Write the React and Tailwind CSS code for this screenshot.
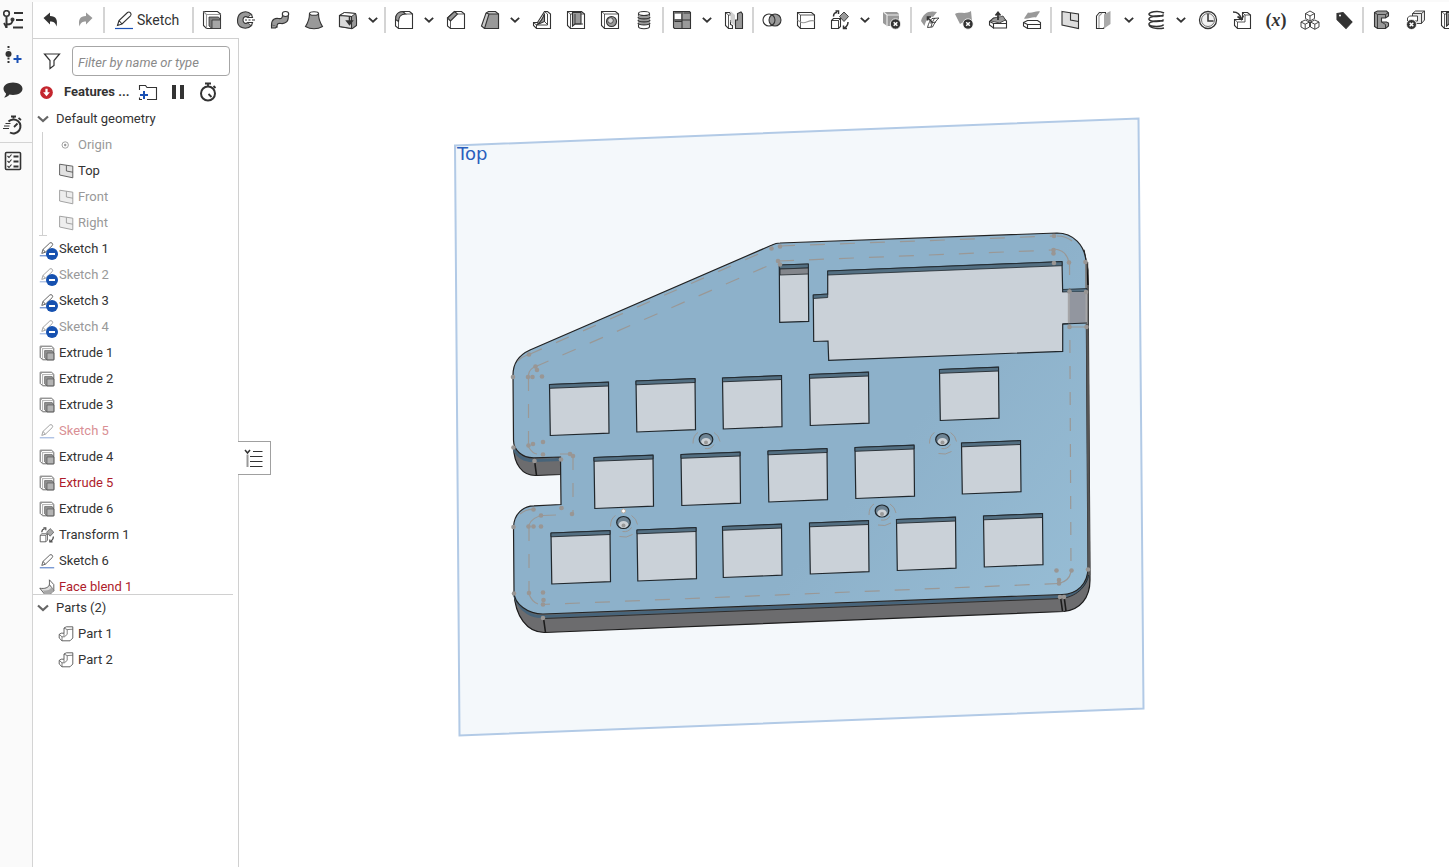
import React from 'react';

const D = '#333333';
const G = '#999999';
const L = '#d9d9d9';

const icons = {
  tree: (
    <>
      <circle cx="3.5" cy="3.5" r="2.8" strokeWidth="1.6" />
      <path d="M3.5 6.5V18M3.5 14.500c4.500 0 6-1 6-4.500" strokeWidth="2" />
      <circle cx="9.5" cy="9.5" r="1.5" fill={D} />
      <path d="M1 13l2.500 4.500" strokeWidth="1.800" />
      <path d="M11 3h9M13 10h7M10 17.500h10" strokeWidth="2" />
    </>
  ),
  undo: <path d="M2.500 8l6.500-5.500v3.500c6 0 8 4 6.500 10.500-1-4-3-5-6.500-5v3z" fill={D} stroke="none" />,
  redo: <path d="M17.500 8L11 2.500v3.500c-6 0-8 4-6.500 10.500 1-4 3-5 6.500-5v3z" fill={G} stroke="none" />,
  sketch: (
    <>
      <path d="M1 18.500h18" stroke="#1b51b5" strokeWidth="1.200" />
      <path d="M3.500 15.500l1.500-5L13.500 2.500q1.500-1.200 3 .3q1.200 1.500 0 3L8 14zM5 10.500l3 3.500" />
    </>
  ),
  extrude: (
    <>
      <path d="M1.500 1.500h14l3 2.500v14.500h-14l-3-3z" fill="#fff" />
      <path d="M1.500 1.500l3 3v14M4.500 4.500h14" stroke={G} />
      <path d="M7 7h9.500l2 3v8.500H10l-3-2.500z" fill="#808080" strokeWidth=".8" />
      <path d="M10 10h8.500v8.500H10z" fill="#a6a6a6" strokeWidth=".8" />
    </>
  ),
  revolve: (
    <>
      <path d="M15.500 4.500C11 0 2 1 1.500 10S11 20 15.500 15.500l-3.500-3c-3 2-5 0-5-2.500s2-4.500 5-2.500z" fill={G} />
      <path d="M15.500 4.500l1 3-4.500 0M15.500 15.500l1-3H12" fill="#fff" />
      <path d="M9 10h2M12.500 10h2M16 10h3" />
    </>
  ),
  sweep: (
    <>
      <path d="M1.500 15c0-6 4-7 7-6.500 3 .5 4-.5 4-3.500L18 4c1.500 8-3 10-7 9.500-3-.5-4 0-4 3.500z" fill={G} />
      <ellipse cx="15.500" cy="4" rx="3.200" ry="2.500" fill="#fff" />
      <path d="M1.500 15v3h4l1.500-1.500" fill={G} />
    </>
  ),
  loft: (
    <>
      <path d="M5.500 3.500c0 6-2 10-4 13 5 3 12 3 17 0-2-3-4-7-4-13z" fill={G} />
      <ellipse cx="10" cy="3.500" rx="4.500" ry="1.800" fill="#fff" />
    </>
  ),
  thicken: (
    <>
      <path d="M1.500 5.500l5-3 11 1c1.500 3 1 8 1 12l-4 3-13-2z" fill={G} />
      <path d="M1.500 5.500l5-3 11 1-4 3z" fill="#fff" strokeWidth=".9" />
      <path d="M1.500 5.500l12 1v12l-12-2z" fill={L} />
      <path d="M11.500 6v7M8.800 11l2.700 3.500L14.200 11z" fill={D} strokeWidth="1.500" />
    </>
  ),
  fillet: (
    <>
      <path d="M9 1.500h6.500l3 2.500v14.500H4.500l-3-2.500V9.500C1.500 5 4 1.500 9 1.500z" fill="#fff" />
      <path d="M1.500 9.500C1.500 4 5 1.500 9 1.500L11.500 4C7 4 4.500 7 4.500 11.500z" fill={G} />
      <path d="M4.500 11.500v7M11.500 4h7M15.500 1.500l3 2.500" strokeWidth=".8" />
    </>
  ),
  chamfer: (
    <>
      <path d="M8.500 1.500h7l3 2.500v14.500H4.500l-3-2.500V8z" fill="#fff" />
      <path d="M1.500 8l7-6.500L11.500 4l-7 7z" fill={G} />
      <path d="M4.500 11v7.500M11.500 4h7" strokeWidth=".8" />
    </>
  ),
  draft: (
    <>
      <path d="M1.500 16L6 3l2.500-1.500h7l3 2.500v14.500h-14z" fill="#c9c9c9" />
      <path d="M9 4h9.500v14.500h-14z" fill={G} />
      <path d="M6 3l3 1" />
    </>
  ),
  rib: (
    <>
      <path d="M12.500 1.500h3l3 2.500v14.500h-14l-3-3v-3h4z" fill="#fff" />
      <path d="M12.500 3.500v8l-8 3.500C9 12 11 8 12.500 3.500z" fill={G} />
      <path d="M12.500 1.500L15.500 4v11h-11v3.500M1.500 12.500l3 2.500M12.500 11.500l3 3" strokeWidth=".9" />
    </>
  ),
  shell: (
    <>
      <path d="M1.500 1.500h14l3 2.500v14.500h-14l-3-3z" fill="#fff" />
      <path d="M1.500 1.500l3 2.500h14M4.500 4v14.500" strokeWidth=".8" />
      <path d="M6.500 2.500H15V14H9L6.500 16z" fill={G} />
      <path d="M9 4v10h8M6.500 2.500v13.500" strokeWidth=".9" />
    </>
  ),
  hole: (
    <>
      <path d="M1.500 1.500h14l3 2.500v14.500h-14l-3-3z" fill="#fff" />
      <path d="M1.500 1.500l3 2.500h14M4.500 4v14.500" strokeWidth=".8" />
      <circle cx="11.500" cy="11.500" r="5" fill={G} />
      <circle cx="10.500" cy="10.500" r="2.800" fill={L} strokeWidth=".8" />
    </>
  ),
  thread: (
    <>
      <path d="M4.500 3.500v13c0 3 11 3 11 0v-13" fill="#fff" />
      <path d="M4 5.500h12v9H4z" fill={G} stroke="none" />
      <ellipse cx="10" cy="3.500" rx="5.500" ry="2" fill="#fff" />
      <path d="M4 7c0 2.500 12 2.500 12 0M4 10c0 2.500 12 2.500 12 0M4 13c0 2.500 12 2.500 12 0" />
    </>
  ),
  pattern: (
    <>
      <path d="M1.500 1.500h16l1 1v16h-16l-1-1z" fill={G} />
      <path d="M3 3h6v6H3z" fill="#fff" stroke="none" />
      <path d="M2 10h16.500M10 2v16.500M2.500 3h6.500M11.500 3h7M2.500 11.500h7" />
    </>
  ),
  mirror: (
    <>
      <path d="M1.500 2.500h4l3 3v5h-2v4l2 1v3H4.500l-3-3z" fill="#fff" />
      <path d="M4.500 5v13.500M1.500 2.500l3 2.500h4" strokeWidth=".8" />
      <path d="M11.500 18.500V10h2V3.500L17 2l1.500 2v14.500z" fill={G} />
      <path d="M6.500 1l4.500 4v11l-4.500-4" fill="#d0d0d0" stroke="none" />
    </>
  ),
  boolean: (
    <>
      <circle cx="13" cy="10" r="6" fill={G} />
      <circle cx="7" cy="10" r="6" />
    </>
  ),
  split: (
    <>
      <path d="M1.500 2.500h14l3 2.500v13.500h-14l-3-3z" fill="#fff" />
      <path d="M1.500 2.500l3 2.500h14M4.500 5v13.500" strokeWidth=".8" />
      <path d="M1.500 10l3 2c5 3 8-3 14-1" stroke={G} />
    </>
  ),
  transform: (
    <>
      <path d="M1.500 10.500l2-2h7v8l-2 2h-7z" fill="#fff" />
      <path d="M1.500 10.500h7v8M8.500 10.500l2-2" strokeWidth=".9" />
      <path d="M14 2l4.500 4.500L14 11.500 9.500 6.500z" fill={G} strokeWidth=".9" />
      <path d="M3.500 6.500C3.500 4 5 2.500 7 2.500M5.500 1h3v3M18 12c0 3-1 4.500-3.500 6M17 18.500h-3.500v-3" strokeWidth="1.500" />
    </>
  ),
  del: (
    <>
      <path d="M1 2h14l2 2v12H5l-4-3z" fill={G} stroke="none" />
      <path d="M1.500 2l3.500 3h12M5 5v12" stroke="#eeeeee" />
      <circle cx="13.500" cy="14" r="5.200" fill={D} stroke="#fff" strokeWidth=".8" />
      <path d="M11.700 12.200l3.600 3.600M15.300 12.200l-3.600 3.600" stroke="#fff" strokeWidth="1.500" />
    </>
  ),
  moveFace: (
    <>
      <path d="M1 11C3 3 9 0 17 2L13 7C9 6 6 10 4.500 16z" fill={G} stroke="none" />
      <path d="M7.500 17.500c1-4 2.500-7 4.500-9l7-.5C16.500 10 14.500 13 12.500 17zM10 13l6-1M15 8c-2 2-3 5-4 9" fill="#fff" strokeWidth=".9" />
      <path d="M12 12L7.500 7.500M7.500 10.500V7H11" strokeWidth="1.600" />
    </>
  ),
  delFace: (
    <>
      <path d="M1 4c5-3 10 1 16-3l1 10c-5 3-9 0-12 3z" fill={G} stroke="none" />
      <circle cx="14" cy="14" r="5.200" fill={D} stroke="#fff" strokeWidth=".8" />
      <path d="M12.200 12.200l3.600 3.600M15.800 12.200l-3.600 3.600" stroke="#fff" strokeWidth="1.500" />
    </>
  ),
  moveUp: (
    <>
      <path d="M1.500 11.500l4-3.500h10l3 3v7h-13l-4-3z" fill="#fff" />
      <path d="M3 11c2-4 5-3 12-5l2.500 4-6 3z" fill={G} strokeWidth=".8" />
      <path d="M1.500 11.500l4 2h13M5.500 13.500v5" />
      <path d="M10 10V3M7.500 5.500L10 2.500l2.500 3" strokeWidth="1.800" />
    </>
  ),
  replace: (
    <>
      <path d="M6 2.500c4 1 8-2 12-1l-4 6c-4-1-8 2-12 1z" fill={G} stroke="none" />
      <path d="M1.500 12.500l4-2h10l3 2v6h-13l-4-2.500z" fill="#fff" />
      <path d="M1.500 12.500l4 2h13M5.500 14.500v4" />
    </>
  ),
  plane: (
    <>
      <path d="M2 1.500l16.500 2.500v14.500L2 15z" fill="#dedede" />
      <path d="M10.500 3v7l8 1.500" />
    </>
  ),
  splitPart: (
    <>
      <path d="M2.500 6l3-3.500h6v13l-2 3h-7z" fill="#fff" />
      <path d="M5 18V6l3-3" stroke={G} />
      <path d="M10 4.500L16.500 1v13L10 18.500z" fill="#aaa" stroke="none" />
    </>
  ),
  helix: (
    <path d="M18 3C12 0 2 2 3 4.500S17 7 17.500 4.500M17.500 6C10 5 2 7 3 9.500s14 2.500 14.500 0M17.500 11C10 10 2 12 3 14.500s14 2.500 14.500 0M3 15c2 4 11 4 15 3" strokeWidth="1.500" />
  ),
  clock: (
    <>
      <circle cx="10" cy="10" r="8.500" strokeWidth="1.300" />
      <circle cx="10" cy="10" r="6.500" strokeWidth=".7" fill="#f2f2f2" />
      <path d="M10 4v7h5.500" strokeWidth="1.500" />
    </>
  ),
  derive: (
    <>
      <path d="M10.500 2.500h5l3 2.500v13.500h-13l-3-3v-6h8z" fill="#fff" />
      <path d="M10.500 2.500l2.500 2.500v7h-7.500v6.500M2.500 9.500l3 2.500M13 5h5.500" strokeWidth=".8" />
      <path d="M1 2c4 0 7 1 8 7M5.500 6.500L9.500 9.500l2-4" strokeWidth="1.600" />
    </>
  ),
  cubes: (
    <>
      <path d="M10 1l4.500 2.500v5L10 11 5.500 8.500v-5zM5.500 3.500L10 6l4.500-2.500M10 6v5" fill="#fff" strokeWidth=".9" />
      <path d="M5.200 10l4.300 2v5l-4.300 2.300L1 17v-5zM1 12l4.200 2.200L9.500 12M5.200 14.200v5" fill="#fff" strokeWidth=".9" />
      <path d="M14.800 10l4.200 2v5l-4.200 2.300-4.300-2.300v-5zM10.500 12l4.300 2.200L19 12M14.800 14.200v5" fill="#fff" strokeWidth=".9" />
    </>
  ),
  tag: (
    <>
      <path d="M3 3.500l6-1L18 12l-6 6.500-9-9z" fill={D} />
      <circle cx="6" cy="5.500" r="1" fill="#fff" stroke="none" />
    </>
  ),
  sheet: (
    <>
      <path d="M2.500 2.500l3-1.500h9l2 2v3l-3 2h-4v4h5l2 1v3l-3 2.500h-8l-3-2z" fill={G} />
      <path d="M2.500 2.500l3 2h8l3-2M5.500 4.500v14M13.500 8V4.500M9.500 12l4 2.500v4" strokeWidth=".9" />
    </>
  ),
  sheetDel: (
    <>
      <path d="M6.500 3.500l3-2.500h9v9l-3 3.500h-9zM6.500 3.500h9v10M15.500 3.500l3-2.500" fill="#e8e8e8" strokeWidth=".9" />
      <path d="M1.500 8l2-2h8v5h-10z" fill="#fff" strokeWidth=".9" />
      <circle cx="5.500" cy="14.500" r="5" fill={D} stroke="#fff" strokeWidth=".8" />
      <path d="M3.700 12.700l3.600 3.600M7.300 12.700l-3.600 3.600" stroke="#fff" strokeWidth="1.500" />
    </>
  ),
  blend: (
    <>
      <path d="M13 1l5.500 6v8l-6-2.500c.8-3 .5-8 .5-11.500z" fill="#fff" />
      <path d="M1 11.500c6 1 11-.5 12-4.500l5.500 7c-2 4-6 6-11.500 5z" fill={L} />
      <path d="M5 14c4 1 9 0 11-4l2.500 4c-2 4-6 6-11.500 5z" fill={G} stroke="none" />
    </>
  ),
  part: (
    <>
      <path d="M7.500 2.500l3-1.500h8v14l-3.500 3.500H5L1.500 15v-4.500L4 9h3.500z" fill="#fff" />
      <path d="M7.500 2.500l4 2 7-.500M11.500 4.500v6L8 13.500H5v5M1.500 10.500l3.500 3M7.500 9v4" strokeWidth=".9" />
    </>
  ),
  origin: (
    <>
      <circle cx="9" cy="10" r="4" />
      <circle cx="9" cy="10" r="1.500" fill={D} stroke="none" />
    </>
  ),
  addNode: (
    <>
      <path d="M5.500 1v4M5.500 12.500v6" strokeWidth="2" strokeDasharray="2 1.500" />
      <circle cx="5.500" cy="9" r="3" fill={D} stroke="none" />
      <path d="M10.500 14h8M14.500 10v8" stroke="#1b51b5" strokeWidth="2" />
    </>
  ),
  comment: <path d="M10 2.500c5.500 0 9.500 2.800 9.500 6.300S15.500 15 10 15c-1.500 0-2.500-.2-3.500-.5-1.500 1.800-3 2.800-5.500 3 1.500-1.200 2-2.500 2-4C1.500 12.300.5 10.700.5 8.800.5 5.300 4.500 2.500 10 2.500z" fill={D} stroke="none" />,
  speed: (
    <>
      <path d="M5.500 6.500A7 7 0 1 1 7 17.500" strokeWidth="2" />
      <path d="M8 1.500h5M10.500 1.500v2M15.500 3l2.500 2M11 12l3.500-3.500" strokeWidth="1.800" />
      <path d="M2.500 8.500h5M1 11h5.500M0 13.500h6" />
    </>
  ),
  checklist: (
    <>
      <rect x="2.500" y="1.500" width="15" height="17" rx="1" strokeWidth="1.600" />
      <path d="M10.500 5.500h5M10.500 10.500h5M10.500 15.500h5" strokeWidth="1.800" />
      <path d="M4.500 5l1.500 1.500 2.500-3M4.500 10l1.500 1.500 2.500-3M4.500 15l1.500 1.500 2.500-3" />
    </>
  ),
  stopwatch: (
    <>
      <circle cx="10" cy="11.500" r="7" strokeWidth="2" />
      <path d="M7 1.500h6M10 1.500v3M15.500 4l2 2M10.500 12l3 3" strokeWidth="1.800" />
    </>
  ),
  folder: (
    <>
      <path d="M1.500 8V3.500h6l1.500 2h9.500v12H9" />
      <path d="M2 13h8M6 9v8" stroke="#1b51b5" strokeWidth="2" />
      <path d="M1.500 15.500v2H4" />
    </>
  ),
  pause: <path d="M4 3h4v14H4zM12 3h4v14h-4z" fill={D} stroke="none" />,
  filter: <path d="M2.500 3h15L12 9.500v5L8 17.500v-8z" strokeWidth="1.200" />,
  alert: (
    <>
      <circle cx="10" cy="10" r="8.500" fill="#c4262e" stroke="none" />
      <path d="M10 5v6" stroke="#fff" strokeWidth="3" />
      <path d="M5.500 9.500L10 15l4.500-5.500z" fill="#fff" stroke="none" />
    </>
  ),
  list: (
    <>
      <path d="M1 2l2.500 3L6 2" strokeWidth="1.500" />
      <path d="M3.500 6.500V19" stroke={G} strokeWidth="2" />
      <path d="M9 3.500h9.500M6 8.500h12.500M6 13.500h12.500M6 18.500h12.500" />
    </>
  ),
};

function Icon({ name, className = 'h-5 w-5' }) {
  return (
    <svg viewBox="0 0 20 20" className={`shrink-0 ${className}`} fill="none" stroke={D} strokeWidth="1.100" aria-hidden="true">
      {icons[name]}
    </svg>
  );
}

function Chevron({ className }) {
  return (
    <svg viewBox="0 0 12 12" className={className} fill="none" stroke="currentColor" strokeWidth="2.200" aria-hidden="true">
      <path d="M1 3.500L6 8l5-4.500" />
    </svg>
  );
}

const toolGroups = [
  [['extrude', 'Extrude'], ['revolve', 'Revolve'], ['sweep', 'Sweep'], ['loft', 'Loft'], ['thicken', 'Thicken', true]],
  [['fillet', 'Fillet', true], ['chamfer', 'Chamfer'], ['draft', 'Draft', true], ['rib', 'Rib'], ['shell', 'Shell'], ['hole', 'Hole'], ['thread', 'External thread']],
  [['pattern', 'Linear pattern', true], ['mirror', 'Mirror']],
  [['boolean', 'Boolean'], ['split', 'Split'], ['transform', 'Transform', true], ['del', 'Delete part']],
  [['moveFace', 'Modify fillet'], ['delFace', 'Delete face'], ['moveUp', 'Move face'], ['replace', 'Replace face']],
  [['plane', 'Plane'], ['splitPart', 'Frame', true], ['helix', 'Helix', true], ['clock', 'Mate connector'], ['derive', 'Derived'], ['variable', 'Variable'], ['cubes', 'Composite part'], ['tag', 'Tag']],
  [['sheet', 'Sheet metal model'], ['sheetDel', 'Finish sheet metal'], ['shell', 'Flange']],
];

function Separator() {
  return <div className="mx-px h-[26px] w-0.5 shrink-0 bg-[#d4d4d4]" />;
}

function Tool({ name, label, menu }) {
  return (
    <>
      <button type="button" aria-label={label} className="flex h-8 w-[34px] shrink-0 items-center justify-center text-[#333]">
        {name === 'variable' ? (
          <span className="font-['Liberation_Serif',serif] text-lg leading-5 font-bold">(<i>x</i>)</span>
        ) : (
          <Icon name={name} />
        )}
      </button>
      {menu && (
        <button type="button" aria-label={`${label} options`} className="flex h-8 w-[18px] shrink-0 items-center pl-[3px] text-[#333]">
          <Chevron className="h-2.5 w-2.5" />
        </button>
      )}
    </>
  );
}

function Toolbar() {
  return (
    <header className="flex h-9 shrink-0 items-center overflow-hidden pl-px">
      <Tool name="undo" label="Undo" />
      <Tool name="redo" label="Redo" />
      <Separator />
      <button type="button" className="flex h-8 w-[85px] shrink-0 items-center gap-[3px] pl-2 text-sm text-[#333]">
        <Icon name="sketch" />
        Sketch
      </button>
      {toolGroups.map((group, i) => (
        <React.Fragment key={i}>
          <Separator />
          {group.map(([name, label, menu]) => (
            <Tool key={label} name={name} label={label} menu={menu} />
          ))}
        </React.Fragment>
      ))}
    </header>
  );
}

function Rail() {
  const items = [['tree', 'Feature list'], ['addNode', 'Add version'], ['comment', 'Comments'], ['speed', 'Performance']];
  return (
    <nav className="flex w-[33px] shrink-0 flex-col border-r border-[#d4d4d4] bg-[#fafafa]">
      {items.map(([name, label]) => (
        <button key={name} type="button" aria-label={label} className="flex h-[35px] items-center pl-[3px]">
          <Icon name={name} />
        </button>
      ))}
      <div className="border-t border-[#d4d4d4]">
        <button type="button" aria-label="Checklist" className="flex h-9 items-center pl-[3px]">
          <Icon name="checklist" />
        </button>
      </div>
    </nav>
  );
}

const features = [
  { icon: 'sketch', label: 'Sketch 1', hidden: true },
  { icon: 'sketch', label: 'Sketch 2', hidden: true, dim: true },
  { icon: 'sketch', label: 'Sketch 3', hidden: true },
  { icon: 'sketch', label: 'Sketch 4', hidden: true, dim: true },
  { icon: 'extrude', label: 'Extrude 1' },
  { icon: 'extrude', label: 'Extrude 2' },
  { icon: 'extrude', label: 'Extrude 3' },
  { icon: 'sketch', label: 'Sketch 5', dim: true, error: true },
  { icon: 'extrude', label: 'Extrude 4' },
  { icon: 'extrude', label: 'Extrude 5', error: true },
  { icon: 'extrude', label: 'Extrude 6' },
  { icon: 'transform', label: 'Transform 1' },
  { icon: 'sketch', label: 'Sketch 6' },
  { icon: 'blend', label: 'Face blend 1', error: true },
];

function textColor({ dim, error }) {
  if (error) return dim ? 'text-[#d98f94]' : 'text-[#ae1c2b]';
  return dim ? 'text-[#999]' : 'text-[#333]';
}

function Row({ item, nested }) {
  return (
    <li className={`flex h-[26px] items-center gap-1 ${nested ? 'pl-[15px]' : 'pl-1.5'} ${textColor(item)}`}>
      <span className="relative shrink-0">
        <Icon name={item.icon} className={item.dim ? 'h-4 w-4 opacity-50' : 'h-4 w-4 opacity-85'} />
        {item.hidden && (
          <svg viewBox="0 0 12 12" className="absolute -right-[3px] -bottom-[3px] h-3 w-3" aria-hidden="true">
            <circle cx="6" cy="6" r="6" fill="#1651b0" />
            <path d="M3 6h6" stroke="#fff" strokeWidth="2" />
          </svg>
        )}
      </span>
      {item.label}
    </li>
  );
}

function GroupTitle({ children }) {
  return (
    <button type="button" className="flex h-[26px] items-center gap-[7px] pl-1 text-[#333]">
      <Chevron className="h-3 w-3 text-[#666]" />
      {children}
    </button>
  );
}

const geometry = [
  { icon: 'origin', label: 'Origin', dim: true },
  { icon: 'plane', label: 'Top' },
  { icon: 'plane', label: 'Front', dim: true },
  { icon: 'plane', label: 'Right', dim: true },
];

function FeaturePanel() {
  return (
    <aside className="w-[206px] shrink-0 border-t border-r border-[#d0d0d0] pt-[7px] text-[13px]">
      <div className="flex items-center pr-2 pl-[9px]">
        <Icon name="filter" />
        <input
          type="text"
          aria-label="Filter by name or type"
          placeholder="Filter by name or type"
          className="ml-2.5 h-[30px] w-full min-w-0 rounded-sm border border-[#a6a6a6] px-[5px] pt-0.5 italic placeholder:text-[#8a8a8a]"
        />
      </div>
      <div className="mt-0.5 flex h-7 items-center pl-1.5">
        <Icon name="alert" className="h-[15px] w-[15px]" />
        <h2 className="ml-2.5 w-[74px] font-bold whitespace-nowrap text-[#333]">Features ...</h2>
        <button type="button" aria-label="Add folder" className="flex w-[30px]"><Icon name="folder" /></button>
        <button type="button" aria-label="Pause" className="flex w-[30px]"><Icon name="pause" /></button>
        <button type="button" aria-label="Regeneration times" className="flex w-[30px]"><Icon name="stopwatch" /></button>
      </div>
      <div className="mr-[5px] max-h-[489px] overflow-hidden border-b border-[#d0d0d0]">
        <GroupTitle>Default geometry</GroupTitle>
        <div className="relative ml-[9px] border-l border-[#d0d0d0]">
          <ul>
            {geometry.map((item) => <Row key={item.label} item={item} nested />)}
          </ul>
          <div className="absolute bottom-0 -left-1 h-px w-2 bg-[#d0d0d0]" />
        </div>
        <ul>
          {features.map((item) => <Row key={item.label} item={item} />)}
        </ul>
      </div>
      <GroupTitle>Parts (2)</GroupTitle>
      <ul className="pl-2.5">
        <Row item={{ icon: 'part', label: 'Part 1' }} nested />
        <Row item={{ icon: 'part', label: 'Part 2' }} nested />
      </ul>
    </aside>
  );
}

const keys = [
  [549.5, 384.5], [636, 381], [722.5, 378], [809.5, 374.5], [939.5, 369.5],
  [594, 457.5], [681, 454.5], [768, 451], [855, 447.5], [961.5, 443],
  [551, 533], [637, 530], [722.5, 526.5], [809.5, 523], [896.5, 519.5], [983.5, 516],
];

const screws = [[706, 439.500], [942.500, 439.500], [882, 511], [623.500, 522.500]];

const dots = [
  [513, 377], [528, 377], [532.5, 377], [542, 376.5], [535.5, 366.5], [537, 370], [529, 354.500],
  [513.5, 447.5], [528.5, 445.5], [533, 444], [543, 442], [543, 454.5], [534.5, 461], [561, 459.5], [570, 454], [573, 456],
  [513.5, 527], [528.5, 526.5], [533.5, 526.5], [541, 526.5], [541, 515.5], [533.5, 509.5], [561.5, 508], [572, 514],
  [514, 593.5], [529, 593], [543, 592.5], [543.5, 600], [543, 604.5], [543, 618],
  [771.5, 248.5], [780, 246.5], [778, 261], [780, 264.5], [1054, 236], [1053.5, 250], [1053.5, 253.5], [1054, 263], [1069, 262.500],
  [1085.5, 262], [1069.5, 291.500], [1086, 292], [1069.5, 327], [1086.5, 327],
  [1056.5, 570.5], [1071.5, 570.5], [1059, 580], [1059, 583.5], [1088, 569.5], [1060, 597], [1064, 597],
];

function Model() {
  return (
    <svg viewBox="239 38 1210 829" preserveAspectRatio="xMinYMin meet" className="block h-full w-full" role="img" aria-label="Keyboard case on Top plane">
      <defs>
        <linearGradient id="face" gradientUnits="userSpaceOnUse" x1="900" y1="440" x2="1090" y2="600">
          <stop offset="0" stopColor="#8db1ca" />
          <stop offset="1" stopColor="#97bdd5" />
        </linearGradient>
      </defs>
      <path d="M455 145.500L1138.500 118.500L1143.500 708.500L459.500 735.500Z" fill="#f4f8fb" stroke="#b2cae6" strokeWidth="2" />
      <text x="457" y="159.500" fontSize="18" fill="#2a5fbd" fontFamily="'DejaVu Sans', sans-serif">Top</text>

      <g stroke="#1c1c1c" strokeWidth="1.200" strokeLinejoin="round">
        <path d="M513.500 447C514 464 522 475.800 536 475.500L561 474.500V455Z" fill="#6c6c6e" />
        <path d="M514 592C515 616 527 633 545 632.500L1064 611.500C1080 610 1090 598 1090 580L1088 270L1084 250L1080 560L1060 590L543 610Z" fill="#6c6c6e" />
        <path d="M534.500 460L536.500 475.500M543.500 618L545.500 632.500M1060.500 597L1062.500 611M1064 596L1066 611" strokeWidth="1.600" />
      </g>
      <path d="M514 449C519 459 527 461 535 460.500L561 459.500" fill="none" stroke="#47647a" strokeWidth="3" />
      <path d="M514.500 595C520 612 533 617.500 544 616.500L1062 596.500C1078 595 1087 584 1088.500 572" fill="none" stroke="#47647a" strokeWidth="3" />
      <path d="M544 618.500L1062 598.500C1079 596 1088 584 1089 572" fill="none" stroke="#2c2c2c" strokeWidth="1" />
      <path
        d="M513 375C513 364 519 355 530 350L772 245Q776 243 780 243L1057 233C1073 233 1085 245 1086 262L1088 568C1088 584 1077 594 1062 594.500L543 614C528 614 514 604 514 592L513.500 527C514 514 523 506 534 505.800L561 504.500L560.500 457L534 457.800C522 458 513.500 450 513.500 440Z"
        fill="url(#face)" stroke="#222" strokeWidth="1.200"
      />
      <path d="M1087 262L1089 575" stroke="#555" strokeWidth="2.500" />
      <path d="M1086.500 262L1088 285" stroke="#111" strokeWidth="1.500" />

      <g stroke="#9a9896" strokeWidth="1.200" fill="none">
        <path d="M537 366L779 261" strokeDasharray="14.500 15.200" strokeDashoffset="2" />
        <path d="M529 354.500L771 248.500" strokeDasharray="14 15.500" />
        <path d="M780 246L1054 236" strokeDasharray="15 15" />
        <path d="M779 261L1054 250" strokeDasharray="15 15" />
        <path d="M1069.500 262L1071 570" strokeDasharray="13 13" />
        <path d="M543 604.500L1059 583.500" strokeDasharray="15 15" strokeDashoffset="8" />
        <path d="M528.500 377V445M529 527V593M573 456V514" strokeDasharray="14 13" />
        <path d="M528.500 376Q528 369 537 366M528.500 447Q533 454 537 454M560 454H572M529 525Q532 517 543 515.500L556 515M529 594Q532 602 538 604M1054 249Q1067 250 1069 263M1071 572Q1069 581 1059 583.500M1057 236Q1066 236 1072 241M518 361Q521 357 529 354.500M520 514Q526 509 534 509.500" />
        <path d="M1086 263V291M1069.500 327H1086.500" />
      </g>

      <path d="M827.700 271L1062 261.700L1062.700 292L1068 291.500V323.700L1062.700 324V351.300L828.700 360.300L828 341L813.700 341.500L813.300 295L827.700 294Z" fill="#cad1d8" stroke="#20272c" strokeWidth="1.200" />
      <path d="M827.700 271L1062 261.700V265.700L827.700 275ZM813.300 295L827.700 294V297.500L813.300 298.500Z" fill="#536f82" stroke="#20272c" strokeWidth=".8" />
      <path d="M1062.700 289.500L1087 288.500V292H1062.700Z" fill="#536f82" stroke="#20272c" strokeWidth=".8" />
      <path d="M1062 292.500H1070V323H1062Z" fill="#cad1d8" />
      <path d="M1069 292H1087V323.500H1069Z" fill="#92969f" />
      <path d="M1068.800 292V324M1086.500 292V324" stroke="#a5a5a7" strokeWidth="2" />
      <path d="M1062.700 324L1087 323" stroke="#20272c" strokeWidth="1.200" />

      <path d="M779.300 265L808.300 264L808.700 321.300L779.700 322.300Z" fill="#cad1d8" stroke="#20272c" strokeWidth="1.200" />
      <path d="M779.300 265L808.300 264V268L779.500 269Z" fill="#536f82" stroke="#20272c" strokeWidth=".8" />
      <path d="M780 269L808.300 268V274L780 275Z" fill="#83868c" stroke="#20272c" strokeWidth=".8" />

      {keys.map(([x, y]) => (
        <g key={`${x}-${y}`} transform={`translate(${x} ${y})`} stroke="#20272c">
          <path d="M0 0L59 -2.300L59.500 48.700L.8 51Z" fill="#cad1d8" strokeWidth="1.200" />
          <path d="M0 0L59 -2.300V1.500L0 3.800Z" fill="#536f82" strokeWidth=".9" />
        </g>
      ))}

      {screws.map(([x, y]) => (
        <g key={`${x}-${y}`} transform={`translate(${x} ${y})`}>
          <path d="M-13 4Q-13 -4 -8 -7M8 -7Q13 -4 14 2M-1 9Q5 10 8 5" fill="none" stroke="#9a9896" />
          {x !== 706 && <path d="M-4 14Q3 16 9 12" fill="none" stroke="#9a9896" />}
          <ellipse rx="6.800" ry="6" fill="#6d8393" stroke="#20272c" strokeWidth="1.200" />
          <ellipse cy="2" rx="4.800" ry="3.500" fill="#ccd1d6" />
          <circle cy="3" r="2" fill="#999" />
        </g>
      ))}
      <circle cx="623.500" cy="511" r="2" fill="#fff" stroke="#b8aca0" />
      <g fill="#999694">
        {dots.map(([x, y]) => <circle key={`${x}-${y}`} cx={x} cy={y} r="2.300" />)}
      </g>
    </svg>
  );
}

export default function App() {
  return (
    <div className="flex h-screen flex-col overflow-hidden bg-white font-[Roboto,sans-serif] text-[#333]">
      <div className="h-0.5 shrink-0 bg-[#fafafa]" />
      <div className="flex min-h-0 flex-1">
        <Rail />
        <div className="flex min-w-0 flex-1 flex-col">
          <Toolbar />
          <div className="flex min-h-0 flex-1">
            <FeaturePanel />
            <main className="relative min-w-0 flex-1">
              <Model />
              <button type="button" aria-label="Toggle feature list" className="absolute top-[403px] -left-px flex h-[34px] w-[33px] items-center justify-center border border-l-0 border-[#a0a0a0] bg-white">
                <Icon name="list" />
              </button>
            </main>
          </div>
        </div>
      </div>
    </div>
  );
}
